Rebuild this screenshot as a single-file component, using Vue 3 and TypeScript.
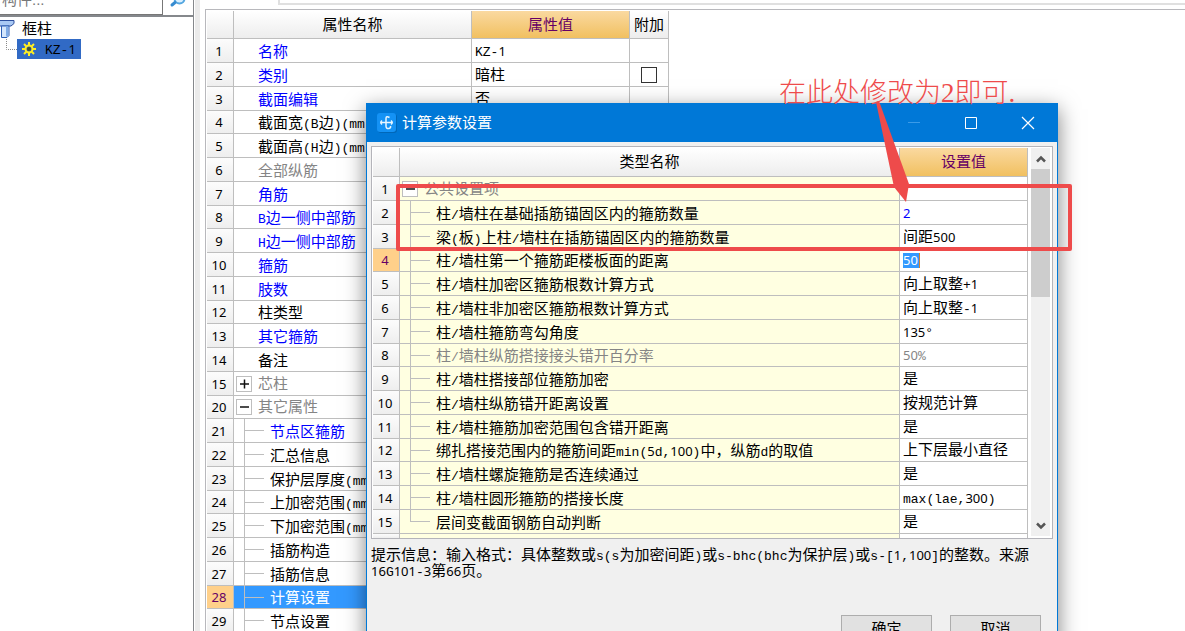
<script setup lang="ts">
import { h } from 'vue'

interface Row {
  no: number
  name: string
  value?: string
  tone?: 'blue' | 'muted'
  kind?: 'group' | 'child' | 'last'
  open?: boolean
  check?: boolean
}

const properties: Row[] = [
  { no: 1, name: '名称', value: 'KZ-1', tone: 'blue' },
  { no: 2, name: '类别', value: '暗柱', tone: 'blue', check: true },
  { no: 3, name: '截面编辑', value: '否', tone: 'blue' },
  { no: 4, name: '截面宽(B边)(mm)' },
  { no: 5, name: '截面高(H边)(mm)' },
  { no: 6, name: '全部纵筋', tone: 'muted' },
  { no: 7, name: '角筋', tone: 'blue' },
  { no: 8, name: 'B边一侧中部筋', tone: 'blue' },
  { no: 9, name: 'H边一侧中部筋', tone: 'blue' },
  { no: 10, name: '箍筋', tone: 'blue' },
  { no: 11, name: '肢数', tone: 'blue' },
  { no: 12, name: '柱类型' },
  { no: 13, name: '其它箍筋', tone: 'blue' },
  { no: 14, name: '备注' },
  { no: 15, name: '芯柱', tone: 'muted', kind: 'group' },
  { no: 20, name: '其它属性', tone: 'muted', kind: 'group', open: true },
  { no: 21, name: '节点区箍筋', tone: 'blue', kind: 'child' },
  { no: 22, name: '汇总信息', kind: 'child' },
  { no: 23, name: '保护层厚度(mm)', kind: 'child' },
  { no: 24, name: '上加密范围(mm)', kind: 'child' },
  { no: 25, name: '下加密范围(mm)', kind: 'child' },
  { no: 26, name: '插筋构造', kind: 'child' },
  { no: 27, name: '插筋信息', kind: 'child' },
  { no: 28, name: '计算设置', kind: 'child' },
  { no: 29, name: '节点设置', kind: 'child' },
]

const settings: Row[] = [
  { no: 1, name: '公共设置项', tone: 'muted', kind: 'group', open: true },
  { no: 2, name: '柱/墙柱在基础插筋锚固区内的箍筋数量', value: '2', kind: 'child' },
  { no: 3, name: '梁(板)上柱/墙柱在插筋锚固区内的箍筋数量', value: '间距500', kind: 'child' },
  { no: 4, name: '柱/墙柱第一个箍筋距楼板面的距离', value: '50', kind: 'child' },
  { no: 5, name: '柱/墙柱加密区箍筋根数计算方式', value: '向上取整+1', kind: 'child' },
  { no: 6, name: '柱/墙柱非加密区箍筋根数计算方式', value: '向上取整-1', kind: 'child' },
  { no: 7, name: '柱/墙柱箍筋弯勾角度', value: '135°', kind: 'child' },
  { no: 8, name: '柱/墙柱纵筋搭接接头错开百分率', value: '50%', tone: 'muted', kind: 'child' },
  { no: 9, name: '柱/墙柱搭接部位箍筋加密', value: '是', kind: 'child' },
  { no: 10, name: '柱/墙柱纵筋错开距离设置', value: '按规范计算', kind: 'child' },
  { no: 11, name: '柱/墙柱箍筋加密范围包含错开距离', value: '是', kind: 'child' },
  { no: 12, name: '绑扎搭接范围内的箍筋间距min(5d,100)中，纵筋d的取值', value: '上下层最小直径', kind: 'child' },
  { no: 13, name: '柱/墙柱螺旋箍筋是否连续通过', value: '是', kind: 'child' },
  { no: 14, name: '柱/墙柱圆形箍筋的搭接长度', value: 'max(lae,300)', kind: 'child' },
  { no: 15, name: '层间变截面钢筋自动判断', value: '是', kind: 'last' },
]

const hint =
  '提示信息：输入格式：具体整数或s(s为加密间距)或s-bhc(bhc为保护层)或s-[1,100]的整数。来源16G101-3第66页。'

// Digits and half-width runs get their own faces, a little smaller than the Chinese text.
const runClass = (run: string) =>
  /^\d/.test(run) ? 'digits' : /^[\x20-\x7e°]/.test(run) ? 'half' : undefined

const Mixed = (props: { text: string }) =>
  h(
    'span',
    props.text
      .split(/(\d+|[\x20-\x2f\x3a-\x7e°]+)/)
      .filter(Boolean)
      .map((run) => (runClass(run) ? h('span', { class: runClass(run) }, run) : run)),
  )
Mixed.props = ['text']
</script>

<template>
  <div class="app">
    <aside class="side">
      <div class="search">
        <input class="search-box" type="text" placeholder="构件..." aria-label="搜索构件" />
        <button class="search-button" type="button" aria-label="搜索">
          <svg width="18" height="18" viewBox="0 0 18 18">
            <circle cx="10.500" cy="6.500" r="5" fill="#d9efff" stroke="#55a7e0" stroke-width="2" />
            <path d="M6 10.500L3 13" stroke="#368bd0" stroke-width="3" stroke-linecap="round" />
          </svg>
        </button>
      </div>
      <div class="tree">
        <div class="tree-root">
          <svg width="16" height="20" viewBox="0 0 16 20">
            <path d="M-3 1.500H14V4.500L11 7H-3Z" fill="#a9c9f4" stroke="#2c4f9e" />
            <path d="M1.500 7H9V16.500L7 18.500H1.500Z" fill="#d4e6fc" stroke="#2c5fb5" />
            <path d="M7 7.500V17.500" stroke="#7fabe6" stroke-width="2" />
          </svg>
          <span>框柱</span>
        </div>
        <div class="tree-leaf">
          <svg class="elbow" width="11" height="20" viewBox="0 0 11 20">
            <path d="M.5 0V10.500H11" fill="none" stroke="#888" stroke-dasharray="1 1" />
          </svg>
          <button class="leaf" type="button">
            <svg width="14" height="14" viewBox="0 0 14 14">
              <circle cx="7" cy="7" r="3.500" fill="none" stroke="#ffee22" stroke-width="2" />
              <path
                d="M7 0V3M7 11V14M0 7H3M11 7H14M2 2L4.200 4.200M9.800 9.800L12 12M12 2L9.800 4.200M4.200 9.800L2 12"
                stroke="#ffee22"
                stroke-width="2"
              />
              <circle cx="7" cy="7" r="2" fill="#47502a" />
            </svg>
            <Mixed text="KZ-1" />
          </button>
        </div>
      </div>
    </aside>

    <main class="panel">
      <div class="toolbar"></div>
      <div class="sheet">
        <table class="grid props">
          <colgroup>
            <col class="c-no" />
            <col class="c-prop" />
            <col class="c-propvalue" />
            <col class="c-extra" />
          </colgroup>
          <thead>
            <tr>
              <th></th>
              <th>属性名称</th>
              <th class="gold">属性值</th>
              <th>附加</th>
            </tr>
          </thead>
          <tbody>
            <tr v-for="r in properties" :key="r.no" :class="[r.tone, { selected: r.no === 28 }]">
              <td class="no" :class="{ current: r.no === 28 }"><span class="digits">{{ r.no }}</span></td>
              <td class="name" :class="[r.kind, { open: r.open }]">
                <div class="label">
                  <button v-if="r.kind === 'group'" class="toggle" type="button" :aria-label="r.name" :aria-expanded="!!r.open">
                    <svg width="14" height="14" viewBox="0 0 14 14">
                      <path :d="r.open ? 'M3 7H12' : 'M3 7H12M7.500 2.500V11.500'" stroke="#111" stroke-width="1.500" />
                    </svg>
                  </button>
                  <Mixed :text="r.name" />
                </div>
              </td>
              <td class="value"><Mixed :text="r.value ?? ''" /></td>
              <td class="extra"><input v-if="r.check" type="checkbox" aria-label="附加 类别" /></td>
            </tr>
          </tbody>
        </table>
      </div>
    </main>

    <section class="dialog" role="dialog" aria-labelledby="dialog-title">
      <header class="titlebar">
        <svg class="logo" width="20" height="20" viewBox="0 0 20 20">
          <rect x="1" y="1" width="19" height="19" rx="3" fill="#0067b8" />
          <rect width="19" height="19" rx="3" fill="#1492f5" />
          <path
            d="M12.500 4.500Q9 2.500 9 5.500V13Q9 16 12 15.500Q14 15 13.500 13M3.500 9.500H15.500M5 7.500Q2.500 9.500 5 11.500M14 7.500Q16.500 9.500 14 11.500"
            fill="none"
            stroke="#e8f6ff"
            stroke-width="1.500"
          />
        </svg>
        <h1 id="dialog-title">计算参数设置</h1>
        <button type="button" aria-label="最小化" disabled>
          <svg width="14" height="14" viewBox="0 0 14 14"><path d="M1 6.500H13" stroke="#3b9be8" /></svg>
        </button>
        <button type="button" aria-label="最大化">
          <svg width="14" height="14" viewBox="0 0 14 14"><path d="M1.500 1.500H12.500V12.500H1.500Z" fill="none" stroke="#fff" /></svg>
        </button>
        <button type="button" aria-label="关闭">
          <svg width="14" height="14" viewBox="0 0 14 14"><path d="M1 1L13 13M13 1L1 13" stroke="#fff" stroke-width="1.200" /></svg>
        </button>
      </header>
      <div class="content">
        <div class="frame">
          <table class="grid config">
            <colgroup>
              <col class="c-no" />
              <col />
              <col class="c-setvalue" />
            </colgroup>
            <thead>
              <tr>
                <th></th>
                <th>类型名称</th>
                <th class="gold">设置值</th>
              </tr>
            </thead>
            <tbody>
              <tr v-for="r in settings" :key="r.no" :class="r.tone">
                <td class="no" :class="{ current: r.no === 4 }"><span class="digits">{{ r.no }}</span></td>
                <td class="name" :class="[r.kind, { open: r.open }]">
                  <div class="label">
                    <button v-if="r.kind === 'group'" class="toggle" type="button" :aria-label="r.name" aria-expanded="true">
                      <svg width="14" height="14" viewBox="0 0 14 14"><path d="M3 7H12" stroke="#111" stroke-width="1.500" /></svg>
                    </button>
                    <Mixed :text="r.name" />
                  </div>
                </td>
                <td class="value" :class="{ changed: r.no === 2 }">
                  <input v-if="r.no === 4" class="editor" type="text" :value="r.value" :aria-label="r.name" />
                  <Mixed v-else :text="r.value ?? ''" />
                </td>
              </tr>
              <tr class="rest">
                <td class="no"></td>
                <td class="name"></td>
                <td class="value"></td>
              </tr>
            </tbody>
          </table>
          <div class="scrollbar">
            <button type="button" aria-label="向上滚动">
              <svg width="10" height="8" viewBox="0 0 10 8"><path d="M1 6.500L5 2.500L9 6.500" fill="none" stroke="#555" stroke-width="2.500" /></svg>
            </button>
            <div class="thumb"></div>
            <button class="down" type="button" aria-label="向下滚动">
              <svg width="10" height="8" viewBox="0 0 10 8"><path d="M1 1.500L5 5.500L9 1.500" fill="none" stroke="#555" stroke-width="2.500" /></svg>
            </button>
          </div>
        </div>
        <p class="hint"><Mixed :text="hint" /></p>
        <footer class="actions">
          <button type="button">确定</button>
          <button type="button">取消</button>
        </footer>
      </div>
    </section>

    <div class="mark-box"></div>
    <svg class="mark-arrow" width="40" height="104" viewBox="0 0 40 104">
      <path d="M1 2L4 1L34 84L31 102L19 87Z" fill="#ee4b4b" />
    </svg>
    <p class="mark-text">在此处修改为2即可.</p>
  </div>
</template>

<style>
body {
  margin: 0;
  overflow: hidden;
}
</style>

<style scoped>
.app {
  position: relative;
  display: flex;
  height: 100vh;
  overflow: hidden;
  background: #fff;
  color: #000;
  font-family: 'Liberation Sans', 'Noto Sans CJK SC', sans-serif;
  font-size: 15px;
  line-height: 20px;
}
.app * {
  box-sizing: border-box;
}
button,
input {
  margin: 0;
  padding: 0;
  font: inherit;
  color: inherit;
}
button {
  display: flex;
  align-items: center;
  justify-content: center;
  border: 0;
  background: none;
}
svg {
  display: block;
  flex: none;
}
.app :deep(.half),
.app :deep(.digits) {
  font-family: 'Liberation Mono', monospace;
  font-size: 13px;
  line-height: 1;
}
.app :deep(.digits) {
  font-family: 'Noto Sans', sans-serif;
}

.side {
  flex: none;
  display: flex;
  flex-direction: column;
  width: 194px;
  border-right: 1px solid #85888c;
}
.search {
  display: flex;
  align-items: flex-end;
  height: 15px;
}
.search-box {
  flex: 1;
  min-width: 0;
  height: 24px;
  padding: 0 0 8px 2px;
  border: 1px solid #777;
  border-left: 0;
}
.search-box::placeholder {
  color: #777;
}
.search-button {
  width: 30px;
  height: 24px;
  padding-bottom: 4px;
}
.tree {
  flex: 1;
  padding-top: 2px;
  border-top: 2px solid #85888c;
}
.tree-root {
  display: flex;
  gap: 6px;
}
.tree-leaf {
  display: flex;
  padding-left: 6px;
}
.leaf {
  height: 20px;
  gap: 9px;
  padding: 0 5px;
  background: #316ac5;
}

.panel {
  flex: 1;
  display: flex;
  flex-direction: column;
  min-width: 0;
  margin-left: 1px;
  border-left: 5px solid #ebebeb;
  padding-left: 5px;
}
.toolbar {
  flex: none;
  height: 5px;
  margin: 0 0 4px 73px;
  border: solid #e0e0e0;
  border-width: 0 0 2px 2px;
}
.sheet {
  flex: 1;
  min-height: 0;
  overflow: hidden;
  padding: 1px 0 0 1px;
  border: solid #b8b8bc;
  border-width: 1px 0 0 1px;
}

.grid {
  table-layout: fixed;
  border-spacing: 0;
}
.props {
  width: 462px;
}
.config {
  flex: 1;
  width: 0;
  min-width: 0;
}
.c-no {
  width: 27px;
}
.c-prop {
  width: 238px;
}
.c-propvalue {
  width: 158px;
}
.c-extra {
  width: 39px;
}
.c-setvalue {
  width: 128px;
}
th,
td {
  height: 24px;
  padding: 0;
  overflow: hidden;
  white-space: nowrap;
  border: solid #bebebe;
  border-width: 0 1px 1px 0;
}
th {
  height: 29px;
  font-weight: 400;
  background: linear-gradient(#fff, #ededed);
}
.props th {
  height: 28px;
}
tr:nth-child(4n) td {
  height: 23px;
}
.gold {
  color: #660066;
  background: linear-gradient(#fad9a0, #f1c060);
}
.no {
  padding-right: 2px;
  text-align: center;
  background: linear-gradient(#fcfcfc, #eee);
}
.current {
  color: #660066;
  background: #ffd08a;
}
.label {
  display: flex;
  align-items: center;
  height: 21px;
  padding: 2px 0 0 24px;
}
.group .label {
  gap: 6px;
  padding: 0 0 0 2px;
}
.child .label,
.last .label {
  padding-left: 36px;
}
.child {
  background-image: linear-gradient(#bebebe, #bebebe), linear-gradient(#bebebe, #bebebe);
  background-repeat: no-repeat;
  background-position: 10px 0, 10px 11px;
  background-size: 1px 100%, 20px 1px;
}
.last {
  background-image: linear-gradient(#bebebe, #bebebe), linear-gradient(#bebebe, #bebebe);
  background-repeat: no-repeat;
  background-position: 10px 0, 10px 11px;
  background-size: 1px 11px, 20px 1px;
}
.toggle {
  width: 16px;
  height: 16px;
  border: 1px solid #bebebe;
  background: #fff;
}
.value {
  padding-left: 3px;
}
.extra {
  text-align: center;
}
.extra input {
  display: block;
  width: 16px;
  height: 16px;
  margin: 0 auto;
  appearance: none;
  border: 1px solid #333;
  background: #fff;
}
.blue .name,
.changed {
  color: #0000ff;
}
.muted {
  color: #858585;
}
.muted .no {
  color: #000;
}
.selected .name,
.selected .value,
.selected .extra {
  color: #fff;
  background-color: #3399ff;
}

.dialog {
  position: absolute;
  top: 103px;
  left: 366px;
  right: 127px;
  border: 1px solid #0078d7;
  background: #f0f0f0;
  box-shadow: 0 6px 20px rgba(0, 0, 0, 0.5);
}
.titlebar {
  display: flex;
  align-items: center;
  height: 38px;
  padding: 0 1px 0 10px;
  background: #0078d7;
  color: #fff;
}
.titlebar h1 {
  flex: 1;
  margin: 0 0 0 5px;
  font-size: 15px;
  font-weight: 400;
}
.titlebar button {
  width: 57px;
  height: 36px;
}
.content {
  padding: 4px 4px 20px;
}
.frame {
  display: flex;
  gap: 3px;
  height: 393px;
  overflow: hidden;
  padding: 1px 2px 2px 1px;
  border: 1px solid #b4b4ba;
  background: #fff;
}
.config .name {
  background-color: #ffffe1;
}
.config .rest td {
  height: 4px;
  border-bottom: 0;
}
.editor {
  display: block;
  width: 17px;
  height: 15px;
  border: 0;
  border-right: 1px solid #d08030;
  background: #3399ff;
  color: #fff;
  font-family: 'Noto Sans', sans-serif;
  font-size: 13px;
}
.scrollbar {
  display: flex;
  flex-direction: column;
  width: 19px;
  background: #f0f0f0;
}
.scrollbar button {
  height: 21px;
}
.scrollbar .down {
  margin-top: auto;
}
.thumb {
  height: 128px;
  background: #cdcdcd;
}
.hint {
  margin: 8px 0 0;
  line-height: 15px;
}
.actions {
  display: flex;
  justify-content: flex-end;
  gap: 18px;
  margin-top: 36px;
  padding-right: 12px;
}
.actions button {
  width: 91px;
  height: 28px;
  border: 1px solid #adadad;
  background: #e1e1e1;
}

.mark-box {
  position: absolute;
  top: 184px;
  left: 396px;
  right: 113px;
  height: 67px;
  border: 4px solid #ee4b4b;
  border-radius: 2px;
}
.mark-arrow {
  position: absolute;
  top: 100px;
  left: 875px;
}
.mark-text {
  position: absolute;
  top: 77px;
  left: 779px;
  margin: 0;
  color: #ee4b4b;
  font-family: 'Liberation Serif', 'Noto Sans CJK SC', serif;
  font-size: 27px;
  font-weight: 300;
  line-height: 32px;
  white-space: nowrap;
}
</style>
